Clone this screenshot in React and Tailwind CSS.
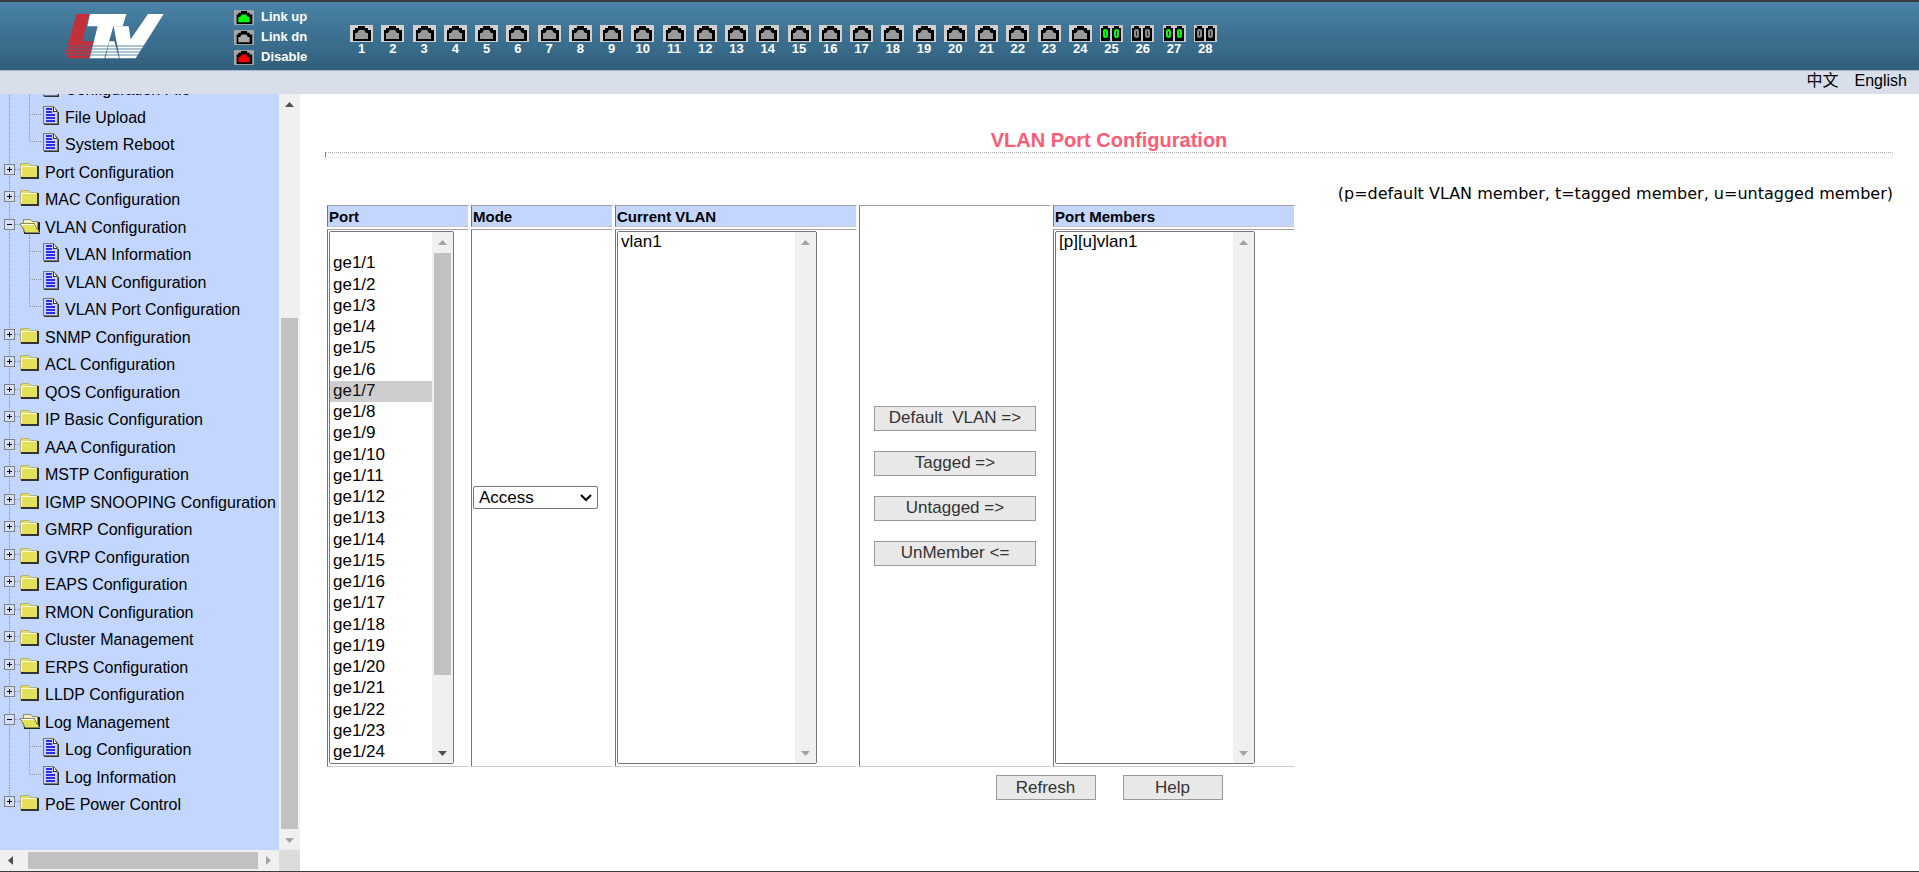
import { clsx } from 'clsx';

const TREE = [
	{ label: 'Configuration File', kind: 'leaf' },
	{ label: 'File Upload', kind: 'leaf' },
	{ label: 'System Reboot', kind: 'leaf', last: true },
	{ label: 'Port Configuration', kind: 'closed' },
	{ label: 'MAC Configuration', kind: 'closed' },
	{ label: 'VLAN Configuration', kind: 'open' },
	{ label: 'VLAN Information', kind: 'leaf' },
	{ label: 'VLAN Configuration', kind: 'leaf' },
	{ label: 'VLAN Port Configuration', kind: 'leaf', last: true },
	{ label: 'SNMP Configuration', kind: 'closed' },
	{ label: 'ACL Configuration', kind: 'closed' },
	{ label: 'QOS Configuration', kind: 'closed' },
	{ label: 'IP Basic Configuration', kind: 'closed' },
	{ label: 'AAA Configuration', kind: 'closed' },
	{ label: 'MSTP Configuration', kind: 'closed' },
	{ label: 'IGMP SNOOPING Configuration', kind: 'closed' },
	{ label: 'GMRP Configuration', kind: 'closed' },
	{ label: 'GVRP Configuration', kind: 'closed' },
	{ label: 'EAPS Configuration', kind: 'closed' },
	{ label: 'RMON Configuration', kind: 'closed' },
	{ label: 'Cluster Management', kind: 'closed' },
	{ label: 'ERPS Configuration', kind: 'closed' },
	{ label: 'LLDP Configuration', kind: 'closed' },
	{ label: 'Log Management', kind: 'open' },
	{ label: 'Log Configuration', kind: 'leaf' },
	{ label: 'Log Information', kind: 'leaf', last: true },
	{ label: 'PoE Power Control', kind: 'closed', end: true },
];

const PORTS = Array.from({ length: 28 }, (_, i) => i + 1);
const LINKED = [25, 27];

const LEGEND = [
	{ label: 'Link up', color: '#00ff00' },
	{ label: 'Link dn', color: '#a8a8a8' },
	{ label: 'Disable', color: '#ff0000' },
];

const Logo = () => (
	<svg viewBox="0 0 330 150" className="w-[110px] h-[50px] shrink-0" role="img" aria-label="LTV">
		<path d="M50 12H88L67 94H100L90 145H32Q16 145 18 122Z" fill="#c4303a" />
		<path
			d="M90 12H199L188 49H160L133 145H89L113 49H82Z"
			fill="#fff"
		/>
		<path d="M161 49H206L212 88L264 12H311L227 145H179Z" fill="#fff" />
		<path d="M148 94H163L177 145H136Z" fill="#fff" />
		<path d="M16 108H252M16 117H248M16 126H242M16 135H236" stroke="#3d7091" strokeWidth="2.5" />
	</svg>
);

/* Copper socket */
const Rj45 = ({ fill = '#999', frame = '#d0d0d0', className }) => (
	<svg viewBox="0 0 23 17" className={className} aria-hidden="true">
		<rect width="23" height="17" fill={frame} />
		<path d="M3 16V5H5V3H8V1H15V3H18V5H21V16Z" fill="#000" />
		<path d="M5 14V8H7L9 5H14L16 8H18V14Z" fill={fill} />
	</svg>
);

/* Fibre pair */
const Sfp = ({ up }) => {
	const ring = up ? '#00ff00' : '#8c8c8c';
	return (
		<svg viewBox="0 0 23 17" className="w-[23px] h-[17px]" aria-hidden="true">
			<rect width="23" height="17" fill="#c8c8c8" />
			{[0, 11].map((x) => (
				<g key={x} transform={`translate(${x} 0)`}>
					<path d="M1 16V3H3V1H8V3H10V16Z" fill="#000" />
					<rect x="4" y="5" width="3" height="7" rx="1.5" fill="#222" stroke={ring} strokeWidth="2" />
				</g>
			))}
		</svg>
	);
};

const Folder = ({ open }) => (
	<g shapeRendering="crispEdges">
		{open ? (
			<>
				<path d="M23 8H30L32 10H37V21H24Z" fill="#f4f1b0" stroke="#8c8c8c" />
				<path d="M24 22H39V11" fill="none" stroke="#222" strokeWidth="2" />
				<path d="M20 12H34L39 21H25Z" fill="#e3e05c" stroke="#8c8c5a" />
				<path d="M21 13H34" stroke="#fff" />
			</>
		) : (
			<>
				<path d="M20 10L22 7H28L30 9H37V21H20Z" fill="#e3e05c" stroke="#b4b08a" />
				<path d="M21 10H36M21 10V20" fill="none" stroke="#fbfadc" />
				<path d="M21 22H38V10" fill="none" stroke="#333" strokeWidth="2" />
			</>
		)}
	</g>
);

const Page = () => (
	<g shapeRendering="crispEdges">
		<path d="M43.5 5.5H53L57.5 10V22.5H43.5Z" fill="#ccd2f8" stroke="#777" />
		<path d="M44 23.5H58.5V11" fill="none" stroke="#333" />
		<path d="M53.5 6V10.5H57" fill="#fff" stroke="#333" />
		<path d="M46 8H52M46 11H52M46 14H55M46 17H55M46 20H55" stroke="#2a2af0" strokeWidth="2" />
	</g>
);

const TreeGlyph = ({ kind, last, end }) => {
	const leaf = kind === 'leaf';
	return (
		<svg className={clsx('h-7 shrink-0', leaf ? 'w-[65px]' : 'w-[45px]')} aria-hidden="true">
			<g stroke="#8a8fa0" strokeDasharray="1 1" fill="none">
				<path d={end ? 'M9.5 0V14' : 'M9.5 0V28'} />
				{leaf && <path d={last ? 'M29.5 0V14' : 'M29.5 0V28'} />}
				{leaf && <path d="M30 13.5H41" />}
				{!leaf && <path d="M15 13.5H21" />}
				{kind === 'open' && <path d="M29.5 22V28" />}
			</g>
			{leaf ? <Page /> : <Folder open={kind === 'open'} />}
			{!leaf && (
				<g shapeRendering="crispEdges">
					<rect x="4.5" y="8.5" width="10" height="10" fill="#d3e0fb" stroke="#808080" />
					<path d="M7 13.5H12" stroke="#000" />
					{kind === 'closed' && <path d="M9.5 11V16" stroke="#000" />}
				</g>
			)}
		</svg>
	);
};

const Arrow = ({ dir, active }) => {
	const d = {
		up: 'M6 13H15L10.5 8Z',
		down: 'M6 9H15L10.5 14Z',
		left: 'M13 6V15L8 10.5Z',
		right: 'M8 6V15L13 10.5Z',
	}[dir];
	return (
		<svg viewBox="0 0 21 21" className="w-[21px] h-[21px] shrink-0" aria-hidden="true">
			<path d={d} fill={active ? '#505050' : '#a3a3a3'} />
		</svg>
	);
};

/**
 * Scrollbar
 *
 * @param {number} before - track share above the thumb
 * @param {number} thumb - thumb share, 0 hides it
 * @param {number} after - track share below the thumb
 */
const Scrollbar = ({ before = 0, thumb = 0, after = 0, upActive, downActive }) => (
	<div className="w-[21px] shrink-0 flex flex-col items-center bg-[#f0f0f0]" aria-hidden="true">
		<Arrow dir="up" active={upActive} />
		<div className="flex-1 flex flex-col">
			<div style={{ flexGrow: before }} />
			{thumb > 0 && <div className="w-[17px] bg-[#c1c1c1]" style={{ flexGrow: thumb }} />}
			<div style={{ flexGrow: after }} />
		</div>
		<Arrow dir="down" active={downActive} />
	</div>
);

const ListBox = ({ label, options, value, className, scroll }) => (
	<div className={clsx('flex h-[533px] border border-[#767676] rounded-xs overflow-hidden', className)}>
		<select
			size={25}
			aria-label={label}
			defaultValue={value}
			className="flex-1 min-w-0 h-full text-[17px] leading-tight text-black bg-white outline-none overflow-y-scroll [scrollbar-width:none]"
		>
			{options.map((option) => (
				<option key={option} value={option} className="h-[1.25em] min-h-0 px-[3px] py-0">
					{option}
				</option>
			))}
		</select>
		<Scrollbar {...scroll} />
	</div>
);

const Button = ({ children, className }) => (
	<button
		type="button"
		className={clsx(
			'h-[25px] flex items-center justify-center border border-[#999] bg-[#e8e8e8] text-[17px] leading-5 text-[#333]',
			className
		)}
	>
		{children}
	</button>
);

const CELL = 'border border-t-[#a0a0a0] border-l-[#767676] border-b-[#c8c8c8] border-r-white text-left';
const HEAD = 'bg-[#c2d6ff] px-px pt-[2px] pb-0 text-[15px] leading-[18px] font-bold';
const BODY = 'px-px pt-px pb-[2px]';

const Header = () => (
	<header className="h-[69px] shrink-0 flex items-start border-b border-[#a3b9cb] bg-linear-to-b from-[#4a83a6] to-[#315f7d] text-white">
		<div className="pl-[60px] pt-2">
			<Logo />
		</div>
		<ul className="ml-16 pt-[5px] w-[116px] shrink-0">
			{LEGEND.map(({ label, color }) => (
				<li key={label} className="h-5 flex items-center gap-[7px] text-[13px] leading-5 font-bold">
					<Rj45 fill={color} frame="#a6a6a6" className="w-5 h-[15px]" />
					{label}
				</li>
			))}
		</ul>
		<ol className="w-[875px] grid grid-cols-28 pt-[23px]">
			{PORTS.map((port) => (
				<li key={port} className="w-[23px] flex flex-col items-center text-[13px] leading-[14px] font-bold">
					{port > 24 ? <Sfp up={LINKED.includes(port)} /> : <Rj45 className="w-[23px] h-[17px]" />}
					{port}
				</li>
			))}
		</ol>
	</header>
);

const Sidebar = () => (
	<div className="w-[300px] shrink-0 flex flex-col">
		<div className="flex-1 min-h-0 flex">
			<nav className="flex-1 min-w-0 overflow-hidden bg-[#c2d6ff]">
				<ul className="-mt-[21px]">
					{TREE.map((item, index) => (
						<li key={index} className="odd:h-7 even:h-[27px]">
							<a href="#" className="flex items-start text-base leading-[34px] whitespace-nowrap text-black">
								<TreeGlyph {...item} />
								{item.label}
							</a>
						</li>
					))}
				</ul>
			</nav>
			<Scrollbar before={203} thumb={511} upActive />
		</div>
		<div className="h-[21px] flex bg-[#f0f0f0]" aria-hidden="true">
			<Arrow dir="left" active />
			<div className="flex-1 flex items-center pl-[7px]">
				<div className="flex-1 h-[17px] bg-[#c1c1c1]" />
			</div>
			<Arrow dir="right" />
			<div className="w-[21px] bg-[#dcdcdc]" />
		</div>
	</div>
);

const VlanTable = () => (
	<table className="border-separate border-spacing-[2px] table-fixed w-[972px]">
		<colgroup>
			<col className="w-[142px]" />
			<col className="w-[142px]" />
			<col className="w-[242px]" />
			<col className="w-[192px]" />
			<col className="w-[242px]" />
		</colgroup>
		<tbody>
			<tr>
				<th className={clsx(CELL, HEAD)}>Port</th>
				<th className={clsx(CELL, HEAD)}>Mode</th>
				<th className={clsx(CELL, HEAD)}>Current VLAN</th>
				<td rowSpan={2} className={clsx(CELL, BODY)}>
					<div className="flex flex-col items-center gap-5">
						<Button className="w-[162px]">Default&nbsp; VLAN =&gt;</Button>
						<Button className="w-[162px]">Tagged =&gt;</Button>
						<Button className="w-[162px]">Untagged =&gt;</Button>
						<Button className="w-[162px]">UnMember &lt;=</Button>
					</div>
				</td>
				<th className={clsx(CELL, HEAD)}>Port Members</th>
			</tr>
			<tr>
				<td className={clsx(CELL, BODY)}>
					<ListBox
						label="Port"
						className="w-[125px]"
						options={['', ...PORTS.map((port) => `ge1/${port}`)]}
						value="ge1/7"
						scroll={{ thumb: 422, after: 67, downActive: true }}
					/>
				</td>
				<td className={clsx(CELL, BODY)}>
					<div className="relative w-[125px]">
						<select
							aria-label="Mode"
							className="block w-full h-[23px] appearance-none border border-[#767676] rounded-xs bg-white pl-[5px] text-[17px] leading-5 text-black"
						>
							<option>Access</option>
							<option>Trunk</option>
							<option>Hybrid</option>
						</select>
						<svg
							viewBox="0 0 12 8"
							className="absolute right-[6px] top-2 w-3 h-2 pointer-events-none"
							aria-hidden="true"
						>
							<path d="M1 1L6 6L11 1" fill="none" stroke="#000" strokeWidth="2" />
						</svg>
					</div>
				</td>
				<td className={clsx(CELL, BODY)}>
					<ListBox label="Current VLAN" className="w-[200px]" options={['vlan1']} />
				</td>
				<td className={clsx(CELL, BODY)}>
					<ListBox label="Port Members" className="w-[200px]" options={['[p][u]vlan1']} />
				</td>
			</tr>
		</tbody>
	</table>
);

export default function App() {
	return (
		<div className="h-screen flex flex-col overflow-hidden border-t-2 border-b border-[#3c3c3c] bg-white font-['Liberation_Sans','Noto_Sans_CJK_SC',sans-serif]">
			<Header />
			<div className="h-[23px] shrink-0 flex justify-end gap-4 bg-[#d8dfea] pr-3 text-base leading-5 text-black">
				<a href="#" lang="zh">中文</a>
				<a href="#">English</a>
			</div>
			<div className="flex-1 min-h-0 flex">
				<Sidebar />
				<main className="flex-1 min-w-0 pl-[25px] pr-[26px] pt-[34px] text-black">
					<h1 className="text-center text-xl leading-6 font-bold text-[#ff5b75]">VLAN Port Configuration</h1>
					<div className="h-[6px] border border-t-[#aaa] [border-top-style:dotted] border-l-[#888] border-b-[#eee] border-r-[#eee]" />
					<p className="pt-[27px] text-right text-base leading-[18px] font-['DejaVu_Sans',sans-serif]">
						(p=default VLAN member, t=tagged member, u=untagged member)
					</p>
					<VlanTable />
					<div className="pt-[6px] flex justify-center gap-[27px]">
						<Button className="w-[100px]">Refresh</Button>
						<Button className="w-[100px]">Help</Button>
					</div>
				</main>
			</div>
		</div>
	);
}
